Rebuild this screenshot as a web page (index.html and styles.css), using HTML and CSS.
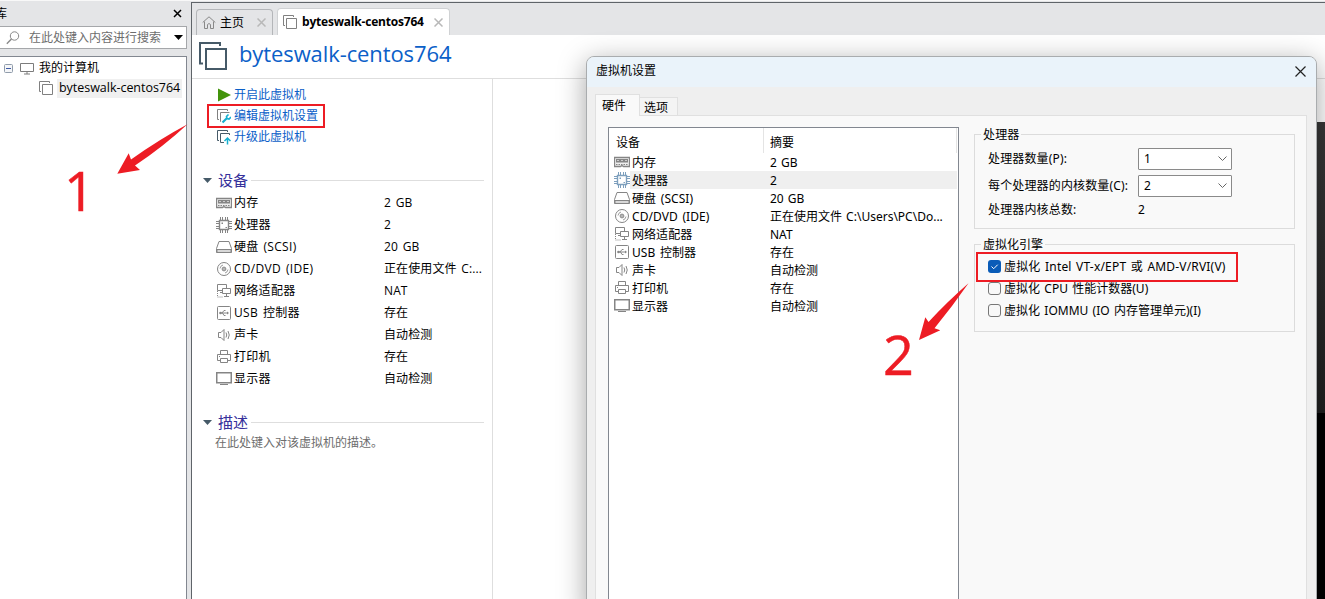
FILE: index.html
```
<!DOCTYPE html>
<html lang="zh-CN">
<head>
<meta charset="utf-8">
<title>byteswalk-centos764</title>
<link rel="stylesheet" href="styles.css">
</head>
<body>
<svg class="defs" width="0" height="0">
  <symbol id="i-vm" viewBox="0 0 14 14"><path d="M2 10.500H.5V.5h10V2M3.500 3.500h10v10h-10z" fill="none" stroke="currentColor"/></symbol>
  <symbol id="i-mem" viewBox="0 0 16 16"><path d="M.5 3.500h15v9H9.500l-1.500-1-1.500 1h-6z" fill="#eee" stroke="currentColor" stroke-width="1.300"/><path d="M2 5h12v3.500H2z" fill="currentColor"/><path d="M3 6.500h2M7 6.500h2M11 6.500h2" stroke="#ccc"/><path d="M2 10.500h12" stroke="currentColor" stroke-dasharray="1.500 1"/></symbol>
  <symbol id="i-cpu" viewBox="0 0 16 16"><path d="M3.500 3.500h9v9h-9z" fill="#fff" stroke="currentColor" stroke-width="1.400"/><path d="M4.500 0v3M6.500 0v3M9.500 0v3M11.500 0v3M4.500 13v3M6.500 13v3M9.500 13v3M11.500 13v3M0 4.500h3M0 6.500h3M0 9.500h3M0 11.500h3M13 4.500h3M13 6.500h3M13 9.500h3M13 11.500h3" stroke="currentColor"/><path d="M5.500 5.500h1.500v1.500H5.500zM9.500 10h1.500v1H9.500z" fill="currentColor"/></symbol>
  <symbol id="i-disk" viewBox="0 0 16 16"><path d="M3 2.500h10l2.500 7v4H.5v-4z" fill="#fff" stroke="currentColor"/><path d="M1 10.500h14v3H1z" fill="#d8d8d8" stroke="currentColor"/></symbol>
  <symbol id="i-cd" viewBox="0 0 16 16"><circle cx="8" cy="8" r="6.500" fill="#fff" stroke="currentColor"/><circle cx="8" cy="8" r="1.900" fill="#ddd" stroke="currentColor"/><circle cx="8" cy="8" r=".8" fill="currentColor"/><path d="M4 7.500Q4.500 4.500 7 4M12 8.500Q11.500 11.500 9 12" fill="none" stroke="currentColor" stroke-width=".8"/></symbol>
  <symbol id="i-net" viewBox="0 0 16 16"><path d="M1.500 1.500h9v6h-9zM4 9.500h4" fill="#fff" stroke="currentColor"/><path d="M6.500 5.500h8v5h-8z" fill="#fff" stroke="currentColor"/><path d="M10.500 11v2M8 13.500h5" stroke="currentColor"/><path d="M1.500 8v6h6" fill="none" stroke="currentColor" stroke-dasharray="1 1"/></symbol>
  <symbol id="i-usb" viewBox="0 0 16 16"><rect x="1.500" y="1.500" width="13" height="13" rx="1" fill="#fff" stroke="currentColor"/><path d="M4 8h8M6 8l2-2.500h1.500M6.500 8l1.500 2.500h1.500" fill="none" stroke="currentColor"/><circle cx="4.500" cy="8" r="1.300" fill="currentColor"/><path d="M11 6.500l2 1.500-2 1.500z" fill="currentColor"/></symbol>
  <symbol id="i-snd" viewBox="0 0 16 16"><path d="M2.500 5.500H5l3-3v11l-3-3H2.500z" fill="#fff" stroke="currentColor"/><path d="M10 5.500Q11.500 8 10 10.500M12 4Q14.500 8 12 12" fill="none" stroke="currentColor"/></symbol>
  <symbol id="i-prn" viewBox="0 0 16 16"><path d="M4.500 6V1.500h7V6M4.500 11.500h-3v-6h13v6h-3" fill="none" stroke="currentColor"/><path d="M4.500 9.500h7v4h-7zM3 7.500h1" fill="none" stroke="currentColor"/></symbol>
  <symbol id="i-mon" viewBox="0 0 16 16"><path d="M.75 1.750h14.500v10H.75z" fill="#fff" stroke="currentColor" stroke-width="1.500"/><path d="M4 13.500h8" stroke="currentColor"/></symbol>
</svg>

<div class="screen">
  <aside class="library">
    <div class="lib-head"><span class="lib-title">库</span>
      <svg class="lib-close" width="9" height="9"><path d="M1 1l7 7M8 1l-7 7" stroke="#000" stroke-width="1.500"/></svg></div>
    <div class="search">
      <svg width="14" height="14"><circle cx="8.500" cy="5" r="4.200" fill="none" stroke="#888"/><path d="M5.500 8L.8 12.700" stroke="#888" stroke-width="1.400"/></svg>
      <span>在此处键入内容进行搜索</span>
      <svg class="drop" width="9" height="5"><path d="M0 0h9L4.500 5z"/></svg>
    </div>
    <div class="tree">
      <div class="node"><svg width="9" height="9"><rect x=".5" y=".5" width="8" height="8" rx="1" fill="#f5f6f8" stroke="#909cab"/><path d="M2 4.500h5" stroke="#3c59a5"/></svg>
        <svg class="pc" width="14" height="12"><path d="M.5.5h13v8H.5zM4 11h6M7 9v2" fill="none" stroke="#7c7c7c"/></svg><span>我的计算机</span></div>
      <div class="node child"><svg class="gray" width="14" height="14"><use href="#i-vm"/></svg><span class="picked">byteswalk-centos764</span></div>
    </div>
  </aside>

  <main class="main">
    <div class="tabs">
      <div class="tab"><svg width="14" height="13"><path d="M.7 6.500L7 .8l6.300 5.700M2.500 5.500v7h3v-4q1.500-2 3 0v4h3v-7" fill="none" stroke="#888"/></svg><span>主页</span><svg class="x" width="9" height="9"><path d="M.5.5l8 8M8.500.5l-8 8"/></svg></div>
      <div class="tab current"><svg class="gray" width="14" height="14"><use href="#i-vm"/></svg><b>byteswalk-centos764</b><svg class="x" width="9" height="9"><path d="M.5.5l8 8M8.500.5l-8 8"/></svg></div>
    </div>
    <header class="vm-head">
      <svg width="28" height="28"><path d="M4 21.500H1V1h20v3M7 7h20v20H7z" fill="none" stroke="#465a68" stroke-width="2"/></svg>
      <h1>byteswalk-centos764</h1>
    </header>
    <div class="vm-body">
      <nav class="links">
        <a><svg width="16" height="16"><path d="M3 1.500L16 8 3 14.500z" fill="#43940c"/></svg>开启此虚拟机</a>
        <a><svg class="gray" width="16" height="16"><path d="M4 11.500H2.500v-10h10V3M6 13.500H5.500v-9h9" fill="none" stroke="currentColor"/><path d="M7.500 14.500l4.500-4.500" stroke="#16b0d0" stroke-width="2.200"/><path d="M13.500 6.500l-2 2 .5 2 2 .5 2-2" fill="none" stroke="#16b0d0" stroke-width="1.600"/></svg>编辑虚拟机设置</a>
        <a><svg class="slate" width="16" height="16"><path d="M4 11.500H2.500v-10h10V3M9 13.500H5.500v-9h9V6" fill="none" stroke="currentColor"/><path d="M12.500 15.500V9.500M9.500 12l3-3 3 3" fill="none" stroke="#16b0d0" stroke-width="1.500"/></svg>升级此虚拟机</a>
      </nav>
      <h2><svg width="9" height="5"><path d="M0 0h9L4.500 5z" fill="#465a68"/></svg>设备</h2>
      <ul class="devices">
        <li><svg><use href="#i-mem"/></svg><span>内存</span><em>2 GB</em></li>
        <li><svg><use href="#i-cpu"/></svg><span>处理器</span><em>2</em></li>
        <li><svg><use href="#i-disk"/></svg><span>硬盘 (SCSI)</span><em>20 GB</em></li>
        <li><svg><use href="#i-cd"/></svg><span>CD/DVD (IDE)</span><em>正在使用文件 C:...</em></li>
        <li><svg><use href="#i-net"/></svg><span>网络适配器</span><em>NAT</em></li>
        <li><svg><use href="#i-usb"/></svg><span>USB 控制器</span><em>存在</em></li>
        <li><svg><use href="#i-snd"/></svg><span>声卡</span><em>自动检测</em></li>
        <li><svg><use href="#i-prn"/></svg><span>打印机</span><em>存在</em></li>
        <li><svg><use href="#i-mon"/></svg><span>显示器</span><em>自动检测</em></li>
      </ul>
      <h2 class="desc-head"><svg width="9" height="5"><path d="M0 0h9L4.500 5z" fill="#465a68"/></svg>描述</h2>
      <p class="desc">在此处键入对该虚拟机的描述。</p>
    </div>
    <div class="console"></div>
  </main>

  <section class="dialog">
    <div class="dlg-title"><span>虚拟机设置</span><svg width="11" height="11"><path d="M.5.5l10 10M10.500.5l-10 10" stroke="#222" stroke-width="1.200"/></svg></div>
    <div class="dlg-tabs"><span class="dtab on">硬件</span><span class="dtab">选项</span></div>
    <div class="page">
      <div class="list">
        <div class="list-head"><span>设备</span><span>摘要</span></div>
        <ul>
          <li><svg><use href="#i-mem"/></svg><span>内存</span><em>2 GB</em></li>
          <li class="sel"><svg><use href="#i-cpu"/></svg><span>处理器</span><em>2</em></li>
          <li><svg><use href="#i-disk"/></svg><span>硬盘 (SCSI)</span><em>20 GB</em></li>
          <li><svg><use href="#i-cd"/></svg><span>CD/DVD (IDE)</span><em>正在使用文件 C:\Users\PC\Do...</em></li>
          <li><svg><use href="#i-net"/></svg><span>网络适配器</span><em>NAT</em></li>
          <li><svg><use href="#i-usb"/></svg><span>USB 控制器</span><em>存在</em></li>
          <li><svg><use href="#i-snd"/></svg><span>声卡</span><em>自动检测</em></li>
          <li><svg><use href="#i-prn"/></svg><span>打印机</span><em>存在</em></li>
          <li><svg><use href="#i-mon"/></svg><span>显示器</span><em>自动检测</em></li>
        </ul>
      </div>
      <div class="settings">
        <div class="group cpu">
          <span class="legend">处理器</span>
          <span>处理器数量(P):</span><div class="combo">1<svg width="9" height="5"><path d="M.5.5l4 4 4-4"/></svg></div>
          <span>每个处理器的内核数量(C):</span><div class="combo">2<svg width="9" height="5"><path d="M.5.5l4 4 4-4"/></svg></div>
          <span>处理器内核总数:</span><span>2</span>
        </div>
        <div class="group virt">
          <span class="legend">虚拟化引擎</span>
          <label><i class="box checked"><svg width="13" height="13"><path d="M3.500 6.500l2.200 2.200 4-4" fill="none" stroke="#fff"/></svg></i><span class="wide">虚拟化 Intel VT-x/EPT 或 AMD-V/RVI(V)</span></label>
          <label><i class="box"></i><span>虚拟化 CPU 性能计数器(U)</span></label>
          <label><i class="box"></i><span>虚拟化 IOMMU (IO 内存管理单元)(I)</span></label>
        </div>
      </div>
    </div>
  </section>

  <div class="mark mark-edit"></div>
  <div class="mark mark-virt"></div>
  <svg class="arrows" width="1325" height="599"><path d="M117.300 173.700L128.700 153.300 131 159.500Q160 139 187.500 124.300 163 147 135 165.500L140 170zM919 340L925.300 317.300 928.500 322Q948 301 968.500 283.300 952 307 934.500 328.300L940.300 330.300z" fill="#ed1c24"/></svg>
  <span class="step step-1">1</span>
  <span class="step step-2">2</span>
</div>
</body>
</html>
```
FILE: styles.css
```
* { box-sizing: border-box; }
body { margin: 0; font: 12px/18px "Open Sans", "Noto Sans CJK SC", sans-serif; color: #000; }
svg { flex: none; display: block; }
em, i { font-style: normal; }
ul { list-style: none; margin: 0; padding: 0; }
.defs { position: absolute; }
.gray { color: #808080; }
.slate { color: #465a68; }

.screen { position: relative; width: 1325px; height: 599px; overflow: hidden; display: flex; gap: 4px; background: #e4e5e7; border-top: 1px solid #f8f8f8; white-space: nowrap; }

.library { width: 187px; display: flex; flex-direction: column; }
.lib-head { height: 25px; display: flex; align-items: center; justify-content: space-between; padding-right: 5px; }
.lib-title { margin-left: -5px; }
.search { height: 23px; border: 1px solid #a5a7aa; border-left: 0; background: #fff; display: flex; align-items: center; color: #6d6d6d; padding: 0 3px 0 6px; }
.search span { margin-left: 9px; }
.drop { margin-left: auto; }
.tree { flex: 1; margin-top: 7px; border: 1px solid #828790; border-left: 0; border-bottom: 0; background: #fff; padding-top: 1px; }
.node { height: 20px; display: flex; align-items: center; padding-left: 4px; }
.pc { margin: 1px 5px 0 7px; }
.child { padding-left: 39px; }
.picked { margin-left: 4px; padding: 0 2px; background: #f0f0f0; width: 125px; height: 19px; font-size: 12.500px; letter-spacing: -.03px; }

.main { width: 1134px; background: #fff; border-left: 1px solid #5f6469; border-top: 1px solid #5f6469; margin-top: 1px; position: relative; }
.tabs { height: 32px; background: #e4e5e7; display: flex; align-items: flex-end; gap: 4px; padding-left: 4px; }
.tab { height: 26px; width: 77px; border: 1px solid #b4b6b9; border-bottom: 0; border-radius: 4px 4px 0 0; display: flex; align-items: center; padding: 0 6px 0 5px; }
.tab span { margin-left: 4px; }
.tab b { margin-left: 5px; font-size: 12px; letter-spacing: -.2px; }
.tab .x { margin-left: auto; stroke: #b8b8b8; stroke-width: 1.500; }
.tab.current { width: 173px; height: 27px; background: #fff; border-color: #d0d2d4; }
.vm-head { height: 44px; border-bottom: 1px solid #dedede; display: flex; align-items: center; padding: 0 0 2px 7px; }
h1 { margin: 0 0 5px 12px; font-size: 22px; line-height: 30px; font-weight: 400; color: #0b60c8; letter-spacing: -.1px; }
.vm-body { width: 301px; height: 521px; border-right: 1px solid #dedede; padding: 5px 8px 0 11px; }
.links { padding-left: 12px; }
.links a { display: flex; align-items: center; height: 21px; gap: 3px; color: #0b60c8; }
h2 { margin: 22px 0 0; height: 23px; display: flex; align-items: center; gap: 6px; padding-bottom: 1px; font-size: 15px; line-height: 22px; font-weight: 400; color: #36319b; }
h2::after { content: ""; flex: 1; height: 1px; background: #dedede; margin-left: -3px; }
.devices { padding-left: 13px; word-spacing: 1.500px; }
li { display: flex; align-items: center; height: 22px; }
li svg { width: 16px; height: 16px; color: #858585; }
.devices span { width: 150px; margin-left: 2px; letter-spacing: .3px; }
.devices em { letter-spacing: .1px; }
.desc-head { margin-top: 21px; }
.desc { margin: 0 0 0 12px; color: #6d6d6d; }
.console { position: absolute; right: 0; top: 119px; width: 60px; height: 477px; background: linear-gradient(#383838, #202020 61%, #000 61%); }

.dialog { position: absolute; left: 586px; top: 55px; width: 731px; height: 560px; border: 1px solid #a9acae; border-radius: 8px 8px 0 0; background: #efefef; box-shadow: 0 6px 28px rgba(0,0,0,.36); font-family: "Noto Sans", "Noto Sans CJK SC", sans-serif; }
.dlg-title { height: 30px; border-radius: 7px 7px 0 0; background: #eaf3fa; display: flex; align-items: center; justify-content: space-between; padding: 0 10px 2px 9px; }
.dlg-tabs { height: 28px; padding-left: 8px; display: flex; align-items: flex-end; }
.dtab { width: 38px; height: 18px; border: 1px solid #e0e0e0; border-width: 1px 1px 0 0; background: #f4f4f4; padding-left: 4px; line-height: 19px; }
.dtab.on { width: 45px; height: 22px; margin-bottom: -1px; border-left-width: 1px; background: #f9f9f9; padding-left: 6px; line-height: 22px; z-index: 1; }
.page { width: 712px; height: 500px; margin-left: 8px; border: 1px solid #e0e0e0; background: #f9f9f9; display: flex; gap: 15px; padding: 11px 0 0 12px; }
.list { width: 351px; height: 500px; background: #fff; border: 1px solid #828790; }
.list-head { height: 25px; margin: 0 1px 0 0; border-right: 1px solid #e4e4e4; display: flex; line-height: 29px; }
.list-head span { width: 155px; padding-left: 7px; border-right: 1px solid #e4e4e4; }
.list-head span:last-child { border: 0; padding-left: 6px; }
.list li { height: 18px; padding-left: 5px; }
.list li span, .list li em { height: 18px; line-height: 20px; }
.list li span { width: 140px; padding-left: 2px; word-spacing: 1.500px; letter-spacing: .05px; }
.list li em { flex: 1; margin-right: 1px; word-spacing: 1px; }
.list .sel span, .list .sel em { background: #efefef; }
.list .sel svg { color: #7d9fbd; }
.list ul { padding-top: 0; }
.settings { width: 321px; padding-top: 7px; }
.group { position: relative; border: 1px solid #dcdcdc; padding-left: 13px; }
.legend { position: absolute; left: 6px; top: -9px; padding: 0 2px; background: #f9f9f9; }
.cpu { height: 95px; display: grid; grid-template-columns: 150px 94px; grid-template-rows: 27px 27px 22px; padding-top: 10px; align-items: center; letter-spacing: .15px; }
.combo { height: 22px; border: 1px solid #8a8a8a; border-radius: 1px; background: #fff; display: flex; align-items: center; justify-content: space-between; padding: 0 4px 0 5px; }
.combo svg { fill: none; stroke: #666; }
.virt { height: 88px; margin-top: 15px; padding-top: 10px; }
label { display: flex; align-items: center; height: 22px; gap: 3px; word-spacing: 1.200px; }
label span { padding-top: 1px; }
.wide { letter-spacing: .18px; }
.box { width: 13px; height: 13px; border: 1px solid #777; border-radius: 3px; background: #f8f8f8; flex: none; }
.box.checked { background: #0a5cb8; border: 0; }

.mark { position: absolute; border: 2px solid #ed1c24; }
.mark-edit { left: 207px; top: 103px; width: 118px; height: 24px; }
.mark-virt { left: 976px; top: 251px; width: 262px; height: 30px; }
.arrows { position: absolute; left: 0; top: -1px; }
.step { position: absolute; font: 54px/60px "Open Sans", sans-serif; color: #ed1c24; -webkit-text-stroke: .5px #ed1c24; }
.step-1 { left: 64px; top: 159px; }
.step-2 { left: 883px; top: 323px; }
```
